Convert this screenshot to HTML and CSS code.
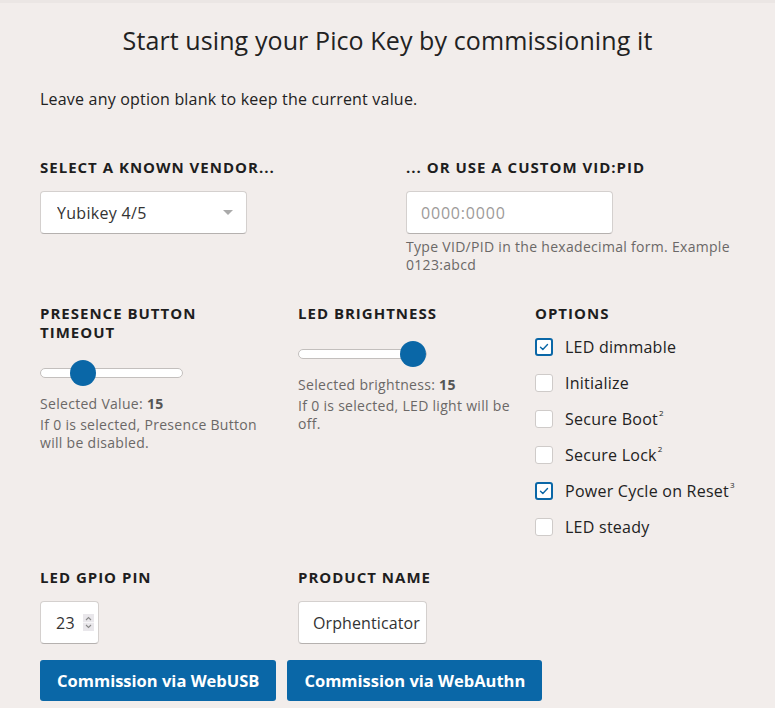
FILE: index.html
```html
<!DOCTYPE html>
<html lang="en">
<head>
<meta charset="utf-8">
<title>Commission Pico Key</title>
<link rel="stylesheet" href="styles.css">
</head>
<body>
<main class="page">
  <h1 class="title">Start using your Pico Key by commissioning it</h1>
  <p class="intro">Leave any option blank to keep the current value.</p>

  <section class="row row-vendor">
    <div class="field">
      <label class="label">Select a known vendor...</label>
      <div class="select-wrap">
        <select class="control select">
          <option>Yubikey 4/5</option>
        </select>
      </div>
    </div>
    <div class="field">
      <label class="label">... or use a custom VID:PID</label>
      <input class="control text" type="text" placeholder="0000:0000">
      <p class="help help-vid">Type VID/PID in the hexadecimal form. Example 0123:abcd</p>
    </div>
  </section>

  <section class="row row-three">
    <div class="field col-a">
      <label class="label">Presence Button<br>Timeout</label>
      <input class="range range-timeout" type="range" min="0" max="60" value="15">
      <p class="help value">Selected Value: <b>15</b></p>
      <p class="help note">If 0 is selected, Presence Button will be disabled.</p>
    </div>
    <div class="field col-b">
      <label class="label">LED Brightness</label>
      <input class="range range-bright" type="range" min="0" max="15" value="15">
      <p class="help value">Selected brightness: <b>15</b></p>
      <p class="help note">If 0 is selected, LED light will be off.</p>
    </div>
    <div class="field">
      <label class="label">Options</label>
      <ul class="options">
        <li class="opt"><span class="box checked"><svg viewBox="0 0 18 18"><path d="M4.5 9.2l3 3 6-6.4" fill="none" stroke="#0a67a7" stroke-width="1.8" stroke-linecap="round" stroke-linejoin="round"/></svg></span><span class="opt-text">LED dimmable</span></li>
        <li class="opt"><span class="box"></span><span class="opt-text">Initialize</span></li>
        <li class="opt"><span class="box"></span><span class="opt-text">Secure Boot<sup>2</sup></span></li>
        <li class="opt"><span class="box"></span><span class="opt-text">Secure Lock<sup>2</sup></span></li>
        <li class="opt"><span class="box checked"><svg viewBox="0 0 18 18"><path d="M4.5 9.2l3 3 6-6.4" fill="none" stroke="#0a67a7" stroke-width="1.8" stroke-linecap="round" stroke-linejoin="round"/></svg></span><span class="opt-text">Power Cycle on Reset<sup>3</sup></span></li>
        <li class="opt"><span class="box"></span><span class="opt-text">LED steady</span></li>
      </ul>
    </div>
  </section>

  <section class="row row-three row-last">
    <div class="field col-a">
      <label class="label">LED GPIO Pin</label>
      <div class="control number">
        <span class="num">23</span>
        <span class="spin"><svg viewBox="0 0 11 17"><path d="M3 6l2.5-2.5L8 6" fill="none" stroke="#8a8a8a" stroke-width="1.1"/><path d="M3 11l2.5 2.5L8 11" fill="none" stroke="#8a8a8a" stroke-width="1.1"/><path d="M0 8.5h11" stroke="#f6f5f7" stroke-width="1"/></svg></span>
      </div>
    </div>
    <div class="field col-b">
      <label class="label">Product Name</label>
      <input class="control text product" type="text" value="Orphenticator">
    </div>
  </section>

  <div class="actions">
    <button class="btn btn-usb">Commission via WebUSB</button>
    <button class="btn btn-authn">Commission via WebAuthn</button>
  </div>
</main>
</body>
</html>
```

FILE: styles.css
```css
* { box-sizing: border-box; }
html, body { margin: 0; padding: 0; }
body {
  background: #f2edeb;
  border-top: 3px solid #ebe6e4;
  font-family: "Open Sans", "Noto Sans", sans-serif;
  color: #222;
}
.page { padding: 0 40px; }
.title {
  margin: 21px 0 0;
  font-size: 25px;
  line-height: 32px;
  font-weight: 500;
  letter-spacing: 0.1px;
  text-align: center;
  color: #222;
}
.intro {
  margin: 32px 0 0;
  font-size: 16px;
  line-height: 22px;
  letter-spacing: 0.2px;
}
.row { display: grid; }
.row-vendor {
  grid-template-columns: 334px 334px;
  column-gap: 32px;
  margin-top: 48px;
}
.row-three {
  grid-template-columns: 258px 237px 1fr;
  margin-top: 30px;
}
.col-a { padding-right: 32px; }
.col-b { padding-right: 11px; }
.row-last { margin-top: 23px; }
.field { display: flex; flex-direction: column; align-items: flex-start; }
.label {
  display: block;
  font-size: 15px;
  line-height: 19px;
  font-weight: 700;
  text-transform: uppercase;
  letter-spacing: 1px;
  color: #1e1e1e;
  margin-bottom: 14px;
}
.control {
  background: #fff;
  border: 1px solid #d4d0ce;
  border-bottom-color: #b5b1af;
  border-radius: 4px;
  font-family: inherit;
  font-size: 16px;
  letter-spacing: 0.3px;
  color: #333;
}
.select-wrap { position: relative; width: 207px; }
.select {
  appearance: none;
  width: 207px;
  height: 43px;
  padding: 0 16px;
}
.select-wrap::after {
  content: "";
  position: absolute;
  right: 14px;
  top: 19px;
  border-left: 5px solid transparent;
  border-right: 5px solid transparent;
  border-top: 5px solid #aaa;
}
.text {
  width: 207px;
  height: 43px;
  padding: 0 14px;
  outline: none;
}
.text::placeholder { color: #9d9a99; letter-spacing: 0.8px; }
.help {
  margin: 0;
  font-size: 14px;
  line-height: 18px;
  letter-spacing: 0.3px;
  color: #6b6867;
}
.help b { color: #555; }
.help-vid { margin-top: 4px; }
.range {
  -webkit-appearance: none;
  appearance: none;
  margin: 0;
  height: 26px;
  background: transparent;
}
.range-timeout { width: 143px; margin-top: 4px; }
.range-bright { width: 129px; margin-top: 4px; }
.range::-webkit-slider-runnable-track {
  height: 10px;
  background: #fff;
  border: 1px solid #c3bfbd;
  border-radius: 5px;
}
.range::-webkit-slider-thumb {
  -webkit-appearance: none;
  width: 26px;
  height: 26px;
  border-radius: 50%;
  background: #0a67a7;
  border: none;
  margin-top: -9px;
}
.value { margin-top: 9px; }
.note { margin-top: 3px; }
.options { list-style: none; margin: -8px 0 0; padding: 0; }
.opt {
  display: flex;
  align-items: center;
  height: 36px;
  font-size: 16px;
  letter-spacing: 0.25px;
  color: #222;
  white-space: nowrap;
}
.opt sup { font-size: 8px; vertical-align: top; line-height: 1; position: relative; top: 1px; margin-left: 1px; }
.box {
  width: 18px;
  height: 18px;
  flex: none;
  margin-right: 12px;
  background: #fff;
  border: 1px solid #cfcbc9;
  border-radius: 3px;
  display: flex;
}
.box.checked { border: 2px solid #0a67a7; }
.box svg { width: 100%; height: 100%; }
.number {
  width: 59px;
  height: 43px;
  display: flex;
  align-items: center;
  padding-left: 15px;
}
.num { width: 27px; }
.spin {
  width: 11px;
  height: 17px;
  background: #e9e7eb;
  display: flex;
}
.spin svg { width: 11px; height: 17px; }
.product { width: 129px; height: 43px; padding: 0 4px 0 14px; letter-spacing: 0.1px; }
.actions {
  display: flex;
  gap: 11px;
  margin-top: 16px;
}
.btn {
  height: 41px;
  padding: 0 17px;
  border: none;
  border-radius: 3px;
  background: #0a67a7;
  color: #fff;
  font-family: inherit;
  font-size: 16.5px;
  font-weight: 700;
}
```
